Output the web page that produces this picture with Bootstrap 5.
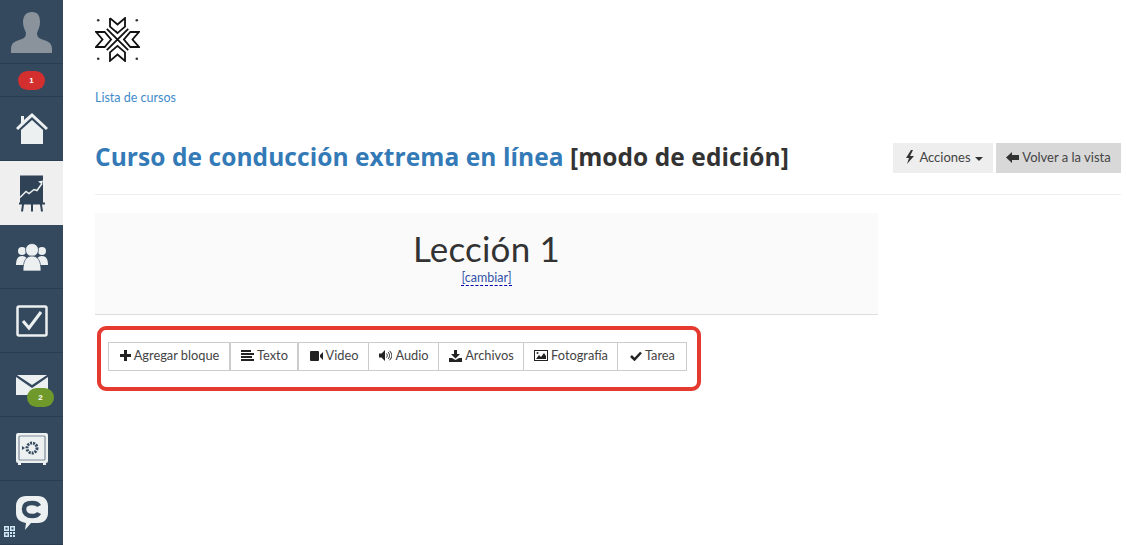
<!DOCTYPE html>
<html lang="es"><head><meta charset="utf-8"><title>Lección</title>
<link href="https://cdn.jsdelivr.net/npm/bootstrap@5.3.0/dist/css/bootstrap.min.css" rel="stylesheet">
<style>
html,body{height:100%;overflow:hidden}
body{font-family:"Open Sans","Liberation Sans",sans-serif;color:#333;background:#fff}
.side{width:63px;height:545px;background:#34495e;flex:none}
.side-item{height:64px;border-bottom:1px solid #2b3d50;position:relative}
.side-badge{height:33px}
.side-active{background:#efefef;height:64px;border-bottom:0}
.pill{position:absolute;height:19px;width:27px;border-radius:10px;color:#fff;font:700 8px/19px "Liberation Sans",sans-serif;text-align:center}
.pill-red{background:#d32f2f;left:18px;top:7px}
.pill-green{background:#6f9a2b;left:27px;top:35px}
.qr{position:absolute;left:4px;bottom:7px}
.main-col{width:1026px;margin-left:32px}
.logo-row{height:80px;padding-top:17px}
.crumb{font:400 12.5px/16px "Lato",sans-serif;color:#428bca;text-decoration:none;display:block;margin-top:10px}
.head-row{height:89px;border-bottom:1px solid #eee}
.course{font:700 24.5px/32px "Open Sans",sans-serif;margin:35px 0 0;color:#333;letter-spacing:.07px}
.course a{color:#337ab7;text-decoration:none}
.act-wrap{margin-top:37px}
.act{font:400 13px/16px "Lato",sans-serif;border:0;border-radius:0;height:30px;color:#444;padding:0 0 2px;display:inline-flex;align-items:center;gap:4px;white-space:nowrap}
.act-a{background:#eee;width:100px;justify-content:center;padding-left:2px}
.act-b{background:#d8d8d8;width:125px;justify-content:center;margin-left:3px;gap:3px}
.caret-s{border-top:4px solid #333;border-left:4px solid transparent;border-right:4px solid transparent;display:inline-block;margin-top:3px}
.lesson{width:783px;height:102px;background:#fafafa;border-bottom:1px solid #ddd;margin-top:18px;text-align:center;padding-top:13px}
.lesson h2{font:400 35px/44px "Lato",sans-serif;color:#333;margin:0;letter-spacing:.2px}
.change{font:400 12.5px/14px "Lato",sans-serif;color:#3352a8;display:inline-block;text-decoration:none;border-bottom:1px dashed #00a;vertical-align:top;margin-top:1px}
.frame{width:604px;height:65px;border:4px solid #e53a2f;border-radius:9px;margin:11px 0 0 2px;padding:12px 0 0 7px}
.tools{display:flex;height:29px}
.tool{font:400 12.8px/25px "Lato",sans-serif;color:#444;border:1px solid #ccc;border-radius:0;margin-left:-1px;padding:0 0 2px 1px;background:#fff;display:flex;align-items:center;justify-content:center;gap:3px;white-space:nowrap}
.tool-flush{margin-left:0}
.tool svg{flex:none}
</style></head><body>
<div class="d-flex">
<nav class="side">
 <div class="side-item d-flex justify-content-center"><svg width="42" height="41" viewBox="0 0 42 41" style="margin-top:12px"><path fill="#8a929c" d="M21 0c6 0 8 4 8 10 0 5-2 8-3 11 0 3 1 5 4 6 6 2 11 3 11 10v4H0v-4c0-7 5-8 11-10 3-1 4-3 4-6-1-3-3-6-3-11 0-6 3-10 9-10z"/></svg></div>
 <div class="side-item side-badge"><span class="pill pill-red">1</span></div>
 <div class="side-item d-flex justify-content-center align-items-center"><svg width="32" height="32" viewBox="0 0 32 32"><path fill="#ecf0f1" d="M16 0 32 15l-2 2L16 4 2 17l-2-2 5-5V3h3v4z"/><path fill="#ecf0f1" d="M16 7 27 17v14H5V17z"/></svg></div>
 <div class="side-item side-active d-flex justify-content-center align-items-center"><svg width="26" height="37" viewBox="0 0 26 36"><path fill="#2f4256" d="M1 0h23v28H1z"/><path fill="none" stroke="#ecf0f1" stroke-width="1.500" d="M1 22l6-6 3 2 5-4 3 1 5-7"/><path fill="#ecf0f1" d="M24 5l-5 1 4 3z"/><path fill="#2f4256" d="M0 27h26v2H0zM3 29h2l-1 7H2zM12 29h2v7h-2zM21 29h2l1 7h-2z"/></svg></div>
 <div class="side-item d-flex justify-content-center align-items-center"><svg width="32" height="28" viewBox="0 0 32 28"><g fill="#ecf0f1"><circle cx="6" cy="8" r="4"/><circle cx="26" cy="8" r="4"/><path d="M0 22c0-6 2-9 6-9s6 3 6 9zM20 22c0-6 2-9 6-9s6 3 6 9z"/><circle cx="16" cy="7" r="6.500" stroke="#34495e" stroke-width=".7"/><path stroke="#34495e" stroke-width=".7" d="M7 28c0-10 3-15 9-15s9 5 9 15z"/></g></svg></div>
 <div class="side-item d-flex justify-content-center align-items-center"><svg width="32" height="32" viewBox="0 0 32 32"><rect x="1.500" y="1.500" width="29" height="29" rx="1.500" fill="#34495e" stroke="#ecf0f1" stroke-width="2.500"/><path fill="none" stroke="#ecf0f1" stroke-width="3" d="M7 16l6 7L25 7"/></svg></div>
 <div class="side-item d-flex justify-content-center"><svg width="32" height="20" viewBox="0 0 32 20" style="margin-top:22px"><path fill="#ecf0f1" d="M1 0h30L16 10zM0 2l16 11L32 2v18H0z"/></svg><span class="pill pill-green">2</span></div>
 <div class="side-item d-flex justify-content-center align-items-center"><svg width="32" height="32" viewBox="0 0 32 32"><rect width="32" height="30" rx="2" fill="#ecf0f1"/><rect x="3" y="3" width="26" height="24" rx="1" fill="none" stroke="#7f8c99" stroke-width="1.200"/><circle cx="16" cy="15" r="5" fill="none" stroke="#34495e" stroke-width="3" stroke-dasharray="2 1"/><path fill="#34495e" d="M6 13l3 2-3 2z"/><path fill="#ecf0f1" d="M2 30h3v2H2zM27 30h3v2h-3z"/></svg></div>
 <div class="side-item d-flex justify-content-center align-items-center"><svg width="32" height="34" viewBox="0 0 32 34"><path fill="#ecf0f1" d="M10 0h12c6 0 10 4 10 10v7c0 6-4 10-10 10h-7l-6 7 1-7c-6-1-10-4-10-10v-7C0 4 4 0 10 0z"/><path fill="none" stroke="#34495e" stroke-width="4.500" d="M23 10c-1-2-3-3-7-3-5 0-8 2-8 6s3 7 8 7c4 0 6-1 7-3"/></svg>
  <svg class="qr" width="11" height="11" viewBox="0 0 11 11"><path fill="#cfe6f5" d="M0 0h5v5H0zM6 0h5v5H6zM0 6h5v5H0zM6 6h2v2H6zM9 6h2v2H9zM6 9h2v2H6zM9 9h2v2H9z"/><path fill="#34495e" d="M1.500 1.500h2v2h-2zM7.500 1.500h2v2h-2zM1.500 7.500h2v2h-2z"/></svg></div>
</nav>
<main class="main-col">
 <div class="logo-row"><svg width="45" height="45" viewBox="2 2 42 42"><g fill="none" stroke="#111" stroke-width="1.700"><path d="M16 3l7 6 7-6v8l-7 6-2-2M16 3v8l7 6"/><path d="M16 43l7-6 7 6v-8l-7-6-7 6z"/><path d="M3 16l6 7-6 7h8l6-7-6-7z"/><path d="M43 16l-6 7 6 7h-8l-6-7 6-7z"/><path d="M13 13l20 20M33 13L13 33"/></g><g fill="#333"><circle cx="5" cy="5" r="1.200"/><circle cx="41" cy="5" r="1.200"/><circle cx="5" cy="41" r="1.200"/><circle cx="41" cy="41" r="1.200"/></g></svg></div>
 <a class="crumb" href="#">Lista de cursos</a>
 <div class="head-row d-flex justify-content-between align-items-start">
  <h1 class="course"><a href="#">Curso de conducción extrema en línea</a> [modo de edición]</h1>
  <div class="d-flex act-wrap">
   <button class="btn act act-a" type="button"><svg width="10" height="14" viewBox="0 0 10 14"><path fill="#333" d="M6 0 1 8h3l-2 6 7-8H5l3-6z"/></svg>Acciones<span class="caret-s"></span></button>
   <button class="btn act act-b" type="button"><svg width="13" height="11" viewBox="0 0 13 11"><path fill="#333" d="M6 0v3h7v5H6v3L0 5.500z"/></svg>Volver a la vista</button>
  </div>
 </div>
 <section class="lesson"><h2>Lección 1</h2><a class="change" href="#">[cambiar]</a></section>
 <div class="frame"><div class="tools">
  <button class="btn tool tool-flush" style="width:122px" type="button"><svg width="11" height="11" viewBox="0 0 11 11"><path fill="#222" d="M4 0h3v4h4v3H7v4H4V7H0V4h4z"/></svg>Agregar bloque</button>
  <button class="btn tool tool-flush" style="width:68px" type="button"><svg width="13" height="11" viewBox="0 0 13 11"><path fill="#222" d="M0 0h10v2H0zM0 3h13v2H0zM0 6h11v2H0zM0 9h13v2H0z"/></svg>Texto</button>
  <button class="btn tool tool-flush" style="width:71px" type="button"><svg width="13" height="10" viewBox="0 0 13 10"><path fill="#222" d="M1 0h7a1 1 0 0 1 1 1v8a1 1 0 0 1-1 1H1a1 1 0 0 1-1-1V1a1 1 0 0 1 1-1zM10 4l3-3v8l-3-3z"/></svg>Video</button>
  <button class="btn tool" style="width:71px" type="button"><svg width="13" height="11" viewBox="0 0 13 11"><path fill="#222" d="M0 3.500h2.500L6 0v11L2.500 7.500H0z"/><path fill="none" stroke="#222" d="M7.500 3.500c1 1 1 3 0 4M9 2c2 2 2 5 0 7M10.500.8c3 3 3 6.400 0 9.400"/></svg>Audio</button>
  <button class="btn tool" style="width:86px" type="button"><svg width="13" height="12" viewBox="0 0 13 12"><path fill="#222" d="M5 0h3v4h3L6.500 8.500 2 4h3zM0 8h3l3.500 2L10 8h3v4H0z"/></svg>Archivos</button>
  <button class="btn tool" style="width:95px" type="button"><svg width="14" height="11" viewBox="0 0 14 11"><rect x=".5" y=".5" width="13" height="10" fill="#fff" stroke="#222"/><path fill="#222" d="M2 9l3-4 2 2 3-4 2 3v3z"/><circle cx="3.500" cy="3" r="1" fill="#222"/></svg>Fotografía</button>
  <button class="btn tool" style="width:70px" type="button"><svg width="12" height="10" viewBox="0 0 12 10"><path fill="none" stroke="#222" stroke-width="2.500" d="M1 5l3.500 3.500L11 1.500"/></svg>Tarea</button>
 </div></div>
</main>
</div>
</body></html>
